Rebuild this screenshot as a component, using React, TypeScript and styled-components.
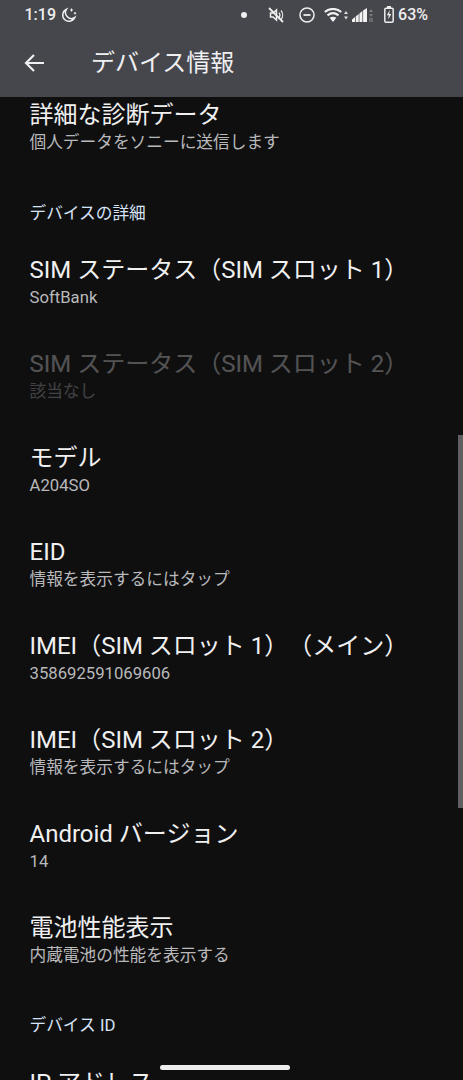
import React from 'react';
import styled, { createGlobalStyle } from 'styled-components';

const Global = createGlobalStyle`
  html, body { margin: 0; padding: 0; background: #0f0f10; }
  body { font-family: "Roboto", "Noto Sans CJK JP", sans-serif; text-spacing-trim: space-all; }
`;

const Screen = styled.div`
  position: relative;
  width: 463px;
  height: 1080px;
  overflow: hidden;
  background: #0f0f10;
  display: flex;
  flex-direction: column;
`;

const Header = styled.header`
  height: 97px;
  flex: none;
  background: #46474c;
  color: #f1f1f3;
`;

const StatusBar = styled.div`
  height: 29px;
  padding: 0 35px 0 24.5px;
  display: flex;
  align-items: center;
  font-size: 16px;
  font-weight: 500;
  color: #eeeeef;
`;

const Clock = styled.span`
  margin-right: 5px;
`;

const StatusRight = styled.div`
  margin-left: auto;
  display: flex;
  align-items: center;
`;

const Dot = styled.span`
  width: 6px;
  height: 6px;
  border-radius: 50%;
  background: #f0f0f0;
  margin-right: 21px;
`;

const Icon = styled.svg<{ $gap?: number }>`
  flex: none;
  margin-right: ${({ $gap }) => $gap ?? 0}px;
`;

const Toolbar = styled.div`
  height: 68px;
  display: flex;
  align-items: center;
  padding-left: 24px;
`;

const BackIcon = styled.svg`
  flex: none;
`;

const PageTitle = styled.h1`
  margin: 0 0 6px 47px;
  font-size: 24px;
  font-weight: 400;
  color: #f0f0f2;
`;

const List = styled.main`
  flex: 1;
  overflow: hidden;
  padding-left: 29.5px;
`;

const Row = styled.div<{ $disabled?: boolean }>`
  height: 94px;
  box-sizing: border-box;
  padding-top: 15px;
  opacity: ${({ $disabled }) => ($disabled ? 0.3 : 1)};
`;

const FirstRow = styled.div`
  height: 106px;
  padding-top: 2px;
  box-sizing: border-box;
`;

const Title = styled.div`
  font-size: 24px;
  line-height: 32px;
  color: #f0f0f1;
  white-space: nowrap;
`;

const Sub = styled.div`
  margin-top: 1px;
  font-size: 16.7px;
  line-height: 22px;
  color: #b9b9bb;
  white-space: nowrap;
`;

const Section = styled.div<{ $offset?: number; $after: number }>`
  margin-top: ${({ $offset }) => $offset ?? 0}px;
  padding-bottom: ${({ $after }) => $after}px;
  font-size: 16.7px;
  line-height: 22px;
  color: #d6e2f6;
`;

const PeekTitle = styled(Title)`
  margin-top: 15px;
`;

const Scrollbar = styled.div`
  position: absolute;
  right: 0;
  top: 435px;
  width: 5px;
  height: 373px;
  background: #5f5f62;
`;

const HomeBar = styled.div`
  position: absolute;
  left: 160px;
  top: 1065px;
  width: 130px;
  height: 5px;
  border-radius: 3px;
  background: #eeeeee;
`;

const Moon = () => (
  <Icon width="16" height="16" viewBox="0 0 16 16" fill="none" stroke="#eee" strokeWidth="1.5">
    <path d="M5.500 2.200a6.300 6.300 0 1 0 8.300 8.300 6 6 0 0 1-8.300-8.300z" />
    <path d="M10.500 1.500v3M9 3h3M14 5v2.400M12.800 6.200h2.400" strokeWidth="1" />
  </Icon>
);

const Muted = () => (
  <Icon $gap={15} width="16" height="16" viewBox="0 0 16 16" fill="none" stroke="#eee" strokeWidth="1.500">
    <path d="M2.500 6h2.500l3.500-3v10l-3.500-3H2.500z" />
    <path d="M11 5.500a4 4 0 0 1 0 5M13 3.500a7 7 0 0 1 0 9" strokeWidth="1.200" />
    <path d="M1 1l14 14" strokeWidth="1.800" />
  </Icon>
);

const Dnd = () => (
  <Icon $gap={9} width="16" height="16" viewBox="0 0 16 16" fill="none" stroke="#eee" strokeWidth="1.500">
    <circle cx="8" cy="8" r="7" />
    <path d="M4.500 8h7" strokeWidth="1.800" />
  </Icon>
);

const Wifi = () => (
  <Icon $gap={4} width="24" height="14" viewBox="0 0 24 14">
    <path d="M0.800 4C5.500 0 12.500 0 17.200 4" fill="none" stroke="#f2f2f2" strokeWidth="2.200" />
    <path d="M3.500 7.300C6.800 4.700 11.200 4.700 14.500 7.300" fill="none" stroke="#f2f2f2" strokeWidth="2.200" />
    <path d="M9 14L5.600 9.800c2.100-1.400 4.700-1.400 6.800 0z" fill="#f2f2f2" />
    <path d="M22 3l2 3h-4zM22 11.500l-2-3h4z" fill="#ddd" />
  </Icon>
);

const Signal = () => (
  <Icon $gap={11} width="21" height="14" viewBox="0 0 21 14">
    <path d="M0 11.500L3 9V14H0zM3.700 8.400L6.700 6V14h-3zM7.400 5.400L10.400 3V14h-3zM11.100 2.400L15 0V14h-3.900z" fill="#f2f2f2" />
    <path d="M19 1l2 3h-4zM19 9l-2-3h4z" fill="#7c7c7e" />
    <path d="M17 10h4v4h-4z" fill="#6a6a6c" />
  </Icon>
);

const Battery = () => (
  <Icon $gap={4} width="10" height="17" viewBox="0 0 10 17" fill="none">
    <rect x="0.800" y="2.300" width="8.400" height="13.900" rx="1.200" stroke="#eee" strokeWidth="1.500" />
    <path d="M3 0h4v2H3z" fill="#eee" />
    <path d="M5.800 4L2.800 9.300H4.800L4.200 13.500 7.300 8H5.200z" fill="#eee" />
  </Icon>
);

const BackArrow = () => (
  <BackIcon width="20" height="20" viewBox="0 0 20 20" fill="none" stroke="#f0f0f2" strokeWidth="2.200">
    <path d="M20 10H2M10 2l-8 8 8 8" />
  </BackIcon>
);

const items = [
  { title: 'SIM ステータス（SIM スロット 1）', sub: 'SoftBank' },
  { title: 'SIM ステータス（SIM スロット 2）', sub: '該当なし', disabled: true },
  { title: 'モデル', sub: 'A204SO' },
  { title: 'EID', sub: '情報を表示するにはタップ' },
  { title: 'IMEI（SIM スロット 1）（メイン）', sub: '358692591069606' },
  { title: 'IMEI（SIM スロット 2）', sub: '情報を表示するにはタップ' },
  { title: 'Android バージョン', sub: '14' },
  { title: '電池性能表示', sub: '内蔵電池の性能を表示する' },
];

export default function App() {
  return (
    <Screen>
      <Global />
      <Header>
        <StatusBar>
          <Clock>1:19</Clock>
          <Moon />
          <StatusRight>
            <Dot />
            <Muted />
            <Dnd />
            <Wifi />
            <Signal />
            <Battery />
            <span>63%</span>
          </StatusRight>
        </StatusBar>
        <Toolbar>
          <BackArrow />
          <PageTitle>デバイス情報</PageTitle>
        </Toolbar>
      </Header>
      <List>
        <FirstRow>
          <Title>詳細な診断データ</Title>
          <Sub>個人データをソニーに送信します</Sub>
        </FirstRow>
        <Section $after={14}>デバイスの詳細</Section>
        {items.map((it) => (
          <Row key={it.title} $disabled={it.disabled}>
            <Title>{it.title}</Title>
            <Sub>{it.sub}</Sub>
          </Row>
        ))}
        <Section $offset={24} $after={15}>デバイス ID</Section>
        <PeekTitle>IP アドレス</PeekTitle>
      </List>
      <Scrollbar />
      <HomeBar />
    </Screen>
  );
}
